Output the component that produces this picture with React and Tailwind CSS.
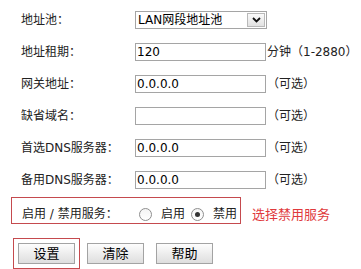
const rows = [
  { label: "地址池：", type: "select", value: "LAN网段地址池" },
  { label: "地址租期：", value: "120", suffix: "分钟（1-2880）" },
  { label: "网关地址：", value: "0.0.0.0", suffix: "（可选）" },
  { label: "缺省域名：", value: "", suffix: "（可选）" },
  { label: "首选DNS服务器：", value: "0.0.0.0", suffix: "（可选）" },
  { label: "备用DNS服务器：", value: "0.0.0.0", suffix: "（可选）" },
];

function SelectBox({ value }) {
  return (
    <div className="flex h-[18px] w-[132px] items-stretch border border-[#a5a5a5] bg-white p-px">
      <span className="flex-1 pl-px text-[12px] leading-[14px] text-black">{value}</span>
      <span className="flex w-[18px] items-center justify-center border border-[#b9b9b9] bg-gradient-to-b from-[#fafafa] to-[#e2e2e2]">
        <svg width="9" height="6" viewBox="0 0 9 6">
          <path d="M1 1 L4.5 4.5 L8 1" fill="none" stroke="#111" strokeWidth="1.8" />
        </svg>
      </span>
    </div>
  );
}

function Field({ row }) {
  return (
    <div className="flex h-[32px] items-center pl-[10px]">
      <span className="w-[114px] text-[12px] text-[#222]">{row.label}</span>
      {row.type === "select" ? (
        <SelectBox value={row.value} />
      ) : (
        <input
          readOnly
          value={row.value}
          className="h-[18px] w-[131px] border border-[#a5a5a5] bg-white px-px text-[12px] leading-none text-black outline-none"
        />
      )}
      {row.suffix && (
        <span className="ml-px text-[12px] text-[#222]">{row.suffix}</span>
      )}
    </div>
  );
}

function Radio({ checked }) {
  return (
    <span className="flex h-[13px] w-[13px] items-center justify-center rounded-full border border-[#8e8e8e] bg-gradient-to-b from-[#f4f4f4] to-white">
      {checked && <span className="h-[5px] w-[5px] rounded-full bg-[#333]" />}
    </span>
  );
}

function Btn({ children, marked }) {
  return (
    <button
      className={
        "h-[21px] w-[57px] border border-[#a3a3a3] bg-gradient-to-b from-[#fdfdfd] to-[#dedede] text-[13px] leading-none text-black " +
        (marked ? "outline-1 outline-solid outline-offset-[4px] [outline-color:#c54a4e]" : "")
      }
    >
      {children}
    </button>
  );
}

export default function App() {
  return (
    <div className="h-[269px] w-[361px] bg-white pl-[11px] pt-[4px] font-['DejaVu_Sans','Noto_Sans_CJK_SC',sans-serif]">
      {rows.map((row) => (
        <Field key={row.label} row={row} />
      ))}

      <div className="flex items-center">
        <div className="mt-px flex h-[27px] w-[230px] items-center border border-[#c54a4e] pl-[10px] pt-[7px] text-[12px] text-[#222]">
          <span className="w-[117px]">启用 / 禁用服务：</span>
          <Radio />
          <span className="ml-[9px] mr-[6px]">启用</span>
          <Radio checked />
          <span className="ml-[9px]">禁用</span>
        </div>
        <span className="ml-[11px] mt-[9px] text-[13px] text-[#e0393c]">选择禁用服务</span>
      </div>

      <div className="mt-[18px] flex gap-[12px] pl-[7px]">
        <Btn marked>设置</Btn>
        <Btn>清除</Btn>
        <Btn>帮助</Btn>
      </div>
    </div>
  );
}
